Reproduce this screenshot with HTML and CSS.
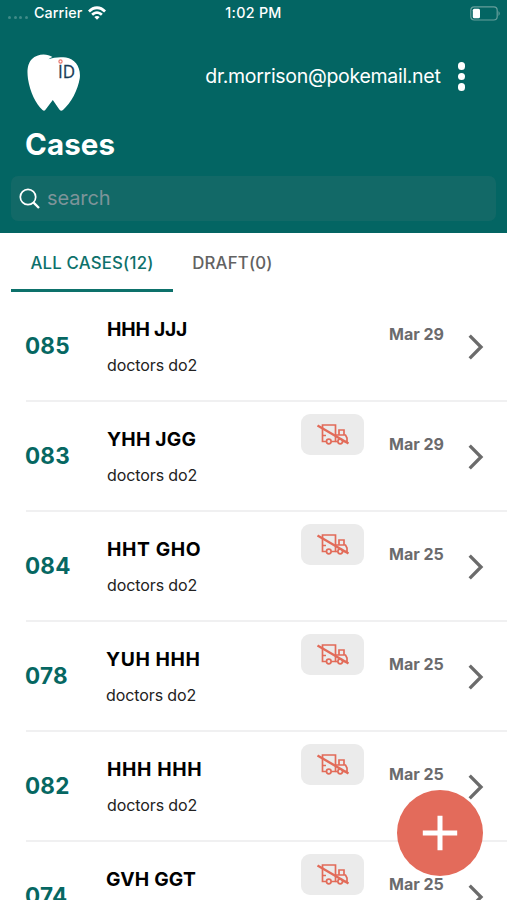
FILE: index.html
```html
<!DOCTYPE html>
<html lang="en">
<head>
<meta charset="utf-8">
<title>Cases</title>
<link rel="stylesheet" href="styles.css">
</head>
<body>
<svg width="0" height="0" class="defs">
  <symbol id="truck" viewBox="0 0 34 24">
    <g fill="none" stroke="currentColor" stroke-width="1.700">
      <path d="M10.500 19.500H6.500V3H19.500V19.500H15"/>
      <path d="M6.500 13.500H10M19.500 13H29.500L31 16V19.500H27M21.500 19.500H19.500M23 12.500V8H28V12.500"/>
      <circle cx="12.800" cy="19.500" r="2.300"/>
      <circle cx="24.200" cy="19.500" r="2.300"/>
      <path d="M1.500 3.500L32.500 21.500" stroke-width="2.400"/>
    </g>
  </symbol>
  <symbol id="chevron" viewBox="0 0 16 26"><path d="M1.700 1.700L13 13L1.700 24.300" fill="none" stroke="currentColor" stroke-width="3.300"/></symbol>
</svg>
<header class="header">
  <div class="status">
    <span class="carrier"><i class="dots"><b></b><b></b><b></b><b></b></i><span class="carrier-name">Carrier</span>
      <svg class="wifi" width="18" height="14" viewBox="0 0 18 14"><path d="M0 4.600C5-1.200 13-1.200 18 4.600L16.100 6.500C12 2 6 2 1.900 6.500ZM3.200 7.800C6.600 4.300 11.400 4.300 14.800 7.800L12.900 9.700C10.600 7.400 7.400 7.400 5.100 9.700ZM6.300 11C7.900 9.600 10.100 9.600 11.700 11L9 13.800Z" fill="#fff"/></svg>
    </span>
    <span class="time">1:02 PM</span>
    <svg class="battery" width="31" height="15" viewBox="0 0 31 15"><rect x=".8" y=".8" width="26.400" height="13.200" rx="3.500" fill="none" stroke="#679f9c" stroke-width="1.200"/><rect x="2.800" y="2.800" width="7.200" height="9.400" rx="1.500" fill="#fff"/><path d="M28.500 5Q31 7.400 28.500 10Z" fill="#679f9c"/></svg>
  </div>
  <div class="account">
    <svg class="logo" width="54" height="58" viewBox="0 0 54 58">
      <path d="M25.500 3C20-1 10-.5 5 5C0 10 0 18 1 25C3 38 9 50 15.500 56Q17.500 58 19 55L25.800 46L32 55Q33.500 58 36 56C44 49 51 36 52.800 24C54 13 48 5 39 3.500C33 2.700 26 3.300 21.500 5.300Q24 3.500 25.500 3Z" fill="#fff"/>
      <text x="31" y="24" class="logo-text" textLength="17" lengthAdjust="spacingAndGlyphs">ID</text>
      <circle cx="33.500" cy="7.500" r="1.600" fill="#fff" stroke="#e87970" stroke-width="1.200"/>
    </svg>
    <span class="email">dr.morrison@pokemail.net</span>
    <span class="more"><b></b><b></b><b></b></span>
  </div>
  <h1 class="title">Cases</h1>
  <div class="search">
    <svg width="22" height="22" viewBox="0 0 22 22"><circle cx="9" cy="9" r="7.700" fill="none" stroke="#fff" stroke-width="1.700"/><path d="M14.600 14.600L20 20" stroke="#fff" stroke-width="2.300"/></svg>
    <span>search</span>
  </div>
</header>
<nav class="tabs">
  <div class="tab active"><span>ALL CASES(12)</span></div>
  <div class="tab"><span>DRAFT(0)</span></div>
</nav>
<main class="list">
  <article class="row"><div class="num">085</div><div class="info"><div class="name tight">HHH JJJ</div><div class="doctor">doctors do2</div></div><div class="date">Mar 29</div><svg class="chev"><use href="#chevron"/></svg></article>
  <article class="row"><div class="num">083</div><div class="info"><div class="name">YHH JGG</div><div class="doctor">doctors do2</div></div><div class="badge"><svg><use href="#truck"/></svg></div><div class="date">Mar 29</div><svg class="chev"><use href="#chevron"/></svg></article>
  <article class="row"><div class="num">084</div><div class="info"><div class="name wide">HHT GHO</div><div class="doctor">doctors do2</div></div><div class="badge"><svg><use href="#truck"/></svg></div><div class="date">Mar 25</div><svg class="chev"><use href="#chevron"/></svg></article>
  <article class="row narrow"><div class="num">078</div><div class="info"><div class="name wide">YUH HHH</div><div class="doctor">doctors do2</div></div><div class="badge"><svg><use href="#truck"/></svg></div><div class="date">Mar 25</div><svg class="chev"><use href="#chevron"/></svg></article>
  <article class="row"><div class="num">082</div><div class="info"><div class="name wide">HHH HHH</div><div class="doctor">doctors do2</div></div><div class="badge"><svg><use href="#truck"/></svg></div><div class="date">Mar 25</div><svg class="chev"><use href="#chevron"/></svg></article>
  <article class="row narrow"><div class="num">074</div><div class="info"><div class="name">GVH GGT</div></div><div class="badge"><svg><use href="#truck"/></svg></div><div class="date">Mar 25</div><svg class="chev"><use href="#chevron"/></svg></article>
</main>
<button class="fab" aria-label="Add"><svg width="36" height="36" viewBox="0 0 36 36"><path d="M18 .8V35.200M.8 18H35.200" stroke="#fff" stroke-width="5"/></svg></button>
</body>
</html>
```
FILE: styles.css
```css
* { box-sizing: border-box; }
body { margin: 0; height: 900px; overflow: hidden; position: relative; background: #fff; font-family: Inter, sans-serif; }
svg { display: block; flex: none; }
.defs { position: absolute; }
.header { height: 233px; background: #036563; color: #fff; }
.status { height: 26px; display: grid; grid-template-columns: 1fr auto 1fr; align-items: center; padding: 0 6px 0 8px; font: 500 14.3px/26px Inter, sans-serif; }
.time { letter-spacing: .3px; margin-left: -2px; }
.carrier { display: flex; align-items: center; }
.carrier-name { letter-spacing: .1px; }
.dots { display: flex; gap: 2.500px; width: 26px; padding-top: 8px; }
.dots b { width: 3px; height: 3px; border-radius: 50%; background: #408b88; }
.wifi { margin-left: 6px; }
.battery { justify-self: end; }
.account { height: 90px; display: flex; align-items: center; padding: 12px 42px 0 27px; }
.logo { margin-top: 11px; }
.logo-text { font: 400 19px "Open Sans", sans-serif; fill: #173b57; stroke: #173b57; stroke-width: .3px; }
.email { margin-left: auto; font-size: 19.500px; line-height: 28px; letter-spacing: -.3px; margin-top: -3px; }
.more { display: flex; flex-direction: column; gap: 3px; margin: -1px 0 0 17px; }
.more b { width: 7.500px; height: 7.500px; border-radius: 50%; background: #fff; }
.title { margin: 9px 0 0 25px; font-size: 29.500px; line-height: 38px; font-weight: 700; letter-spacing: .1px; }
.search { margin: 13px 11px 0; height: 45px; border-radius: 7px; background: #126967; display: flex; align-items: center; gap: 6px; padding: 0 0 0 8px; font-size: 20px; letter-spacing: -.1px; color: #7d9499; }
.search span { margin-top: -1px; }
.tabs { height: 59px; display: flex; padding-left: 11px; font: 500 16.800px/60px Inter, sans-serif; letter-spacing: .2px; color: #626262; }
.tab { width: 162px; text-align: center; }
.tab + .tab { width: 119px; }
.active { color: #0d716b; border-bottom: 3px solid #0d716b; }
.list { height: 608px; overflow: hidden; }
.row { height: 110px; margin-left: 26px; border-bottom: 2px solid #f0f0f1; display: flex; align-items: flex-start; color: #666; }
.row:last-child { height: 108px; border: 0; }
.num { width: 82px; margin-left: -1px; padding-top: 38px; font-size: 22.500px; line-height: 32px; font-weight: 700; letter-spacing: .2px; color: #066762; }
.row.narrow .num { width: 81px; }
.info { flex: 1; padding-top: 24px; color: #000; }
.name { font-size: 19.300px; line-height: 26px; font-weight: 700; letter-spacing: .2px; white-space: nowrap; }
.name.wide { letter-spacing: .6px; }
.name.tight { letter-spacing: -.2px; }
.doctor { font-size: 16px; line-height: 24px; margin-top: 11px; letter-spacing: -.1px; color: #222; }
.badge { width: 63px; height: 41px; margin: 12px 25px 0 0; border-radius: 9px; background: #ebebeb; color: #e26b59; display: flex; align-items: center; justify-content: center; }
.badge svg { width: 34px; height: 24px; margin-top: -1px; }
.date { width: 79px; padding-top: 31px; font-size: 16px; line-height: 23px; font-weight: 700; color: #6b6b6d; }
.chev { width: 16px; height: 26px; margin: 42px 23px 0 0; color: #6b6b6b; }
.fab { position: absolute; left: 397px; top: 790px; width: 86px; height: 86px; border: 0; padding: 0; border-radius: 50%; background: #e36b5b; display: flex; align-items: center; justify-content: center; }
```
